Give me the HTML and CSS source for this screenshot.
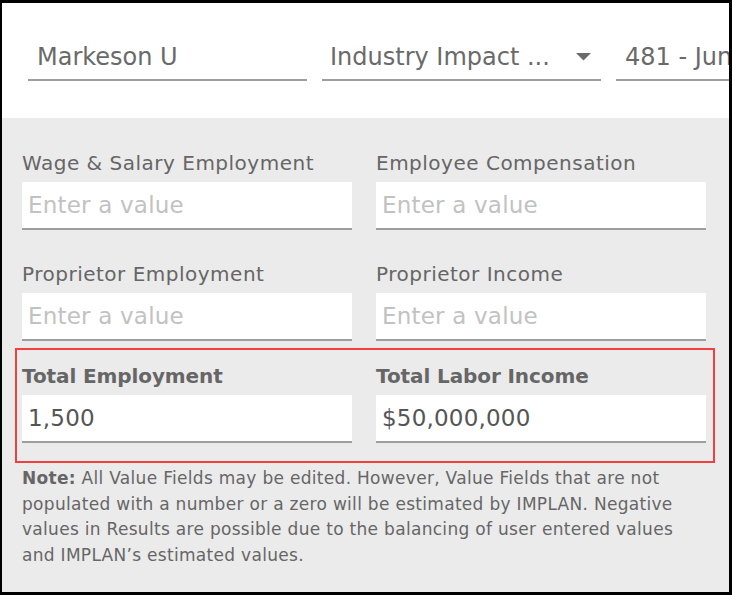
FILE: index.html
```html
<!DOCTYPE html>
<html lang="en">
<head>
<meta charset="utf-8">
<title>Industry Impact</title>
<link rel="stylesheet" href="styles.css">
</head>
<body>
<div class="frame">
  <header class="top">
    <div class="tfield">
      <span class="tval">Markeson U</span>
    </div>
    <div class="tfield select">
      <span class="tval">Industry Impact ...</span>
      <svg class="arrow" width="15" height="8" viewBox="0 0 15 8"><polygon points="0,0 15,0 7.5,7.5" fill="#6b6b6b"/></svg>
    </div>
    <div class="tfield wide">
      <span class="tval">481 - Junior Colleges, Colleges, Universities</span>
    </div>
  </header>
  <main class="panel">
    <div class="grid">
      <div class="field">
        <label class="lbl">Wage &amp; Salary Employment</label>
        <input class="inp" type="text" placeholder="Enter a value">
      </div>
      <div class="field">
        <label class="lbl">Employee Compensation</label>
        <input class="inp" type="text" placeholder="Enter a value">
      </div>
      <div class="field">
        <label class="lbl">Proprietor Employment</label>
        <input class="inp" type="text" placeholder="Enter a value">
      </div>
      <div class="field">
        <label class="lbl">Proprietor Income</label>
        <input class="inp" type="text" placeholder="Enter a value">
      </div>
    </div>
    <div class="grid totals">
      <div class="field">
        <label class="lbl bold">Total Employment</label>
        <input class="inp" type="text" value="1,500">
      </div>
      <div class="field">
        <label class="lbl bold">Total Labor Income</label>
        <input class="inp" type="text" value="$50,000,000">
      </div>
    </div>
    <p class="note"><strong>Note:</strong> All Value Fields may be edited. However, Value Fields that are not populated with a number or a zero will be estimated by IMPLAN. Negative values in Results are possible due to the balancing of user entered values and IMPLAN’s estimated values.</p>
  </main>
</div>
</body>
</html>
```
FILE: styles.css
```css
* { box-sizing: border-box; }
html, body { margin: 0; padding: 0; background: #000; }
.frame {
  width: 732px;
  height: 595px;
  border-style: solid;
  border-color: #000;
  border-width: 3px 3px 3px 2px;
  background: #ebebeb;
  display: flex;
  flex-direction: column;
  overflow: hidden;
  font-family: "DejaVu Sans", sans-serif;
}
.top {
  background: #fff;
  height: 115px;
  display: flex;
  gap: 15px;
  padding: 0 0 0 26px;
  overflow: hidden;
  flex-shrink: 0;
}
.tfield {
  width: 279px;
  flex-shrink: 0;
  height: 78px;
  border-bottom: 2px solid #9e9e9e;
  display: flex;
  align-items: flex-end;
  padding: 0 0 7px 9px;
  color: #6a6a6a;
  font-size: 24px;
  white-space: nowrap;
}
.tfield.select { padding-left: 8px; justify-content: space-between; padding-right: 10px; }
.tfield.select .arrow { margin-bottom: 11px; }
.tfield.wide { width: 300px; }
.tval { line-height: 30px; }
.panel {
  flex: 1;
  padding: 30px 21px 0 20px;
}
.grid {
  display: grid;
  grid-template-columns: 330px 330px;
  column-gap: 24px;
  row-gap: 29px;
}
.field { display: flex; flex-direction: column; }
.lbl {
  font-size: 20px;
  letter-spacing: 0.5px;
  line-height: 30px;
  height: 30px;
  margin-bottom: 4px;
  color: #666;
  white-space: nowrap;
}
.lbl.bold { font-weight: bold; letter-spacing: -0.1px; }
.inp {
  display: block;
  width: 100%;
  height: 48px;
  margin: 0;
  border: none;
  border-bottom: 2px solid #9e9e9e;
  background: #fff;
  padding: 0 6px;
  font-family: "DejaVu Sans", sans-serif;
  font-size: 23px;
  letter-spacing: 0.2px;
  color: #555;
  outline: none;
}
.inp::placeholder { color: #c2c2c2; }
.totals {
  margin: 7px -7px 0;
  border: 2px solid #f24040;
  padding: 11px 5px 18px;
}
.note {
  margin: 3px 0 0;
  max-width: 680px;
  font-size: 17px;
  letter-spacing: 0.3px;
  line-height: 25.5px;
  color: #666;
}
.note strong { font-weight: bold; }
```
